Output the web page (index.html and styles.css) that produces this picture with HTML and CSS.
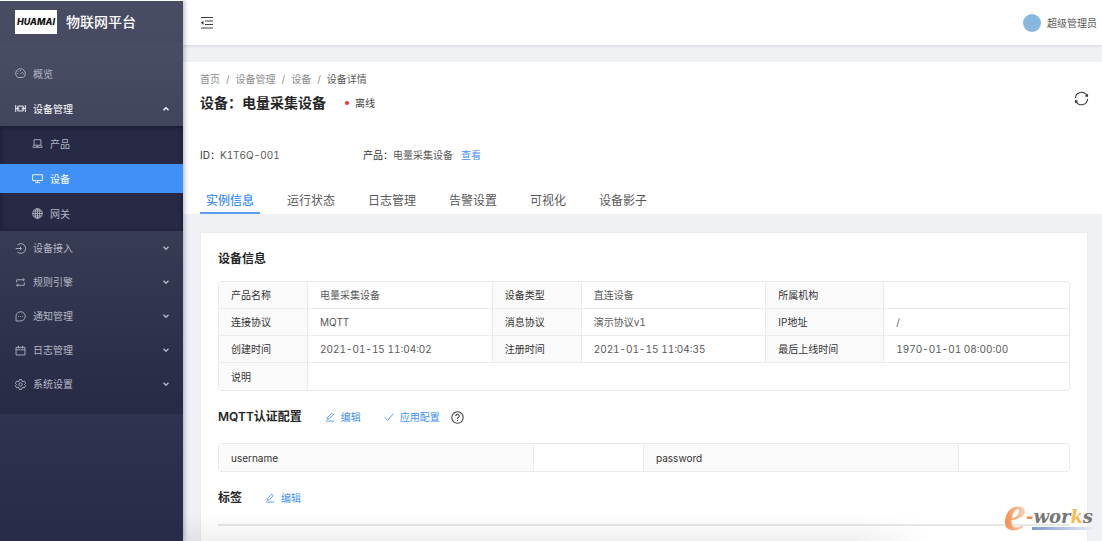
FILE: index.html
```html
<!DOCTYPE html>
<html lang="zh-CN">
<head>
<meta charset="utf-8">
<title>物联网平台</title>
<link rel="stylesheet" href="styles.css">
</head>
<body>
<div class="layout">
  <aside class="sider">
    <div class="brand">
      <span class="brand-logo">HUAMAI</span>
      <h1 class="brand-name">物联网平台</h1>
    </div>
    <nav class="menu">
      <a class="item item-top" href="#">
        <svg class="icon" viewBox="0 0 16 16"><path d="M4 13.800a7 7 0 1 1 8 0z"/><path d="M8 9l2.800-3M8 3v1.500M3.200 8h1.400M11.500 8h1.400M4.500 4.600l1 1"/></svg>
        <span>概览</span>
      </a>
      <button class="item item-top item-open" type="button">
        <svg class="icon" viewBox="0 0 16 16"><path d="M1 3v10M15 3v10M4 4.500h8v7H4zM1 8h3M12 8h3M5.500 6.500v3M10.500 6.500v3"/></svg>
        <span>设备管理</span>
        <svg class="arrow" viewBox="0 0 8 8"><path d="M1.500 5.300L4 2.800l2.500 2.500"/></svg>
      </button>
      <div class="submenu">
        <a class="item item-sub" href="#">
          <svg class="icon" viewBox="0 0 16 16"><path d="M3 2.500h10v8H3zM1.500 13.500v-1.500l1.500-1.500M14.500 13.500v-1.500l-1.500-1.500M1.500 13.500h13M6 12h4"/></svg>
          <span>产品</span>
        </a>
        <a class="item item-sub item-active" href="#">
          <svg class="icon" viewBox="0 0 16 16"><path d="M1 2.500h14v8.500H1zM8 11v3M4.500 14h7"/></svg>
          <span>设备</span>
        </a>
        <a class="item item-sub" href="#">
          <svg class="icon" viewBox="0 0 16 16"><circle cx="8" cy="8" r="7"/><ellipse cx="8" cy="8" rx="3.300" ry="7"/><path d="M8 1v14M1 8h14M2.200 4.500h11.600M2.200 11.500h11.600"/></svg>
          <span>网关</span>
        </a>
      </div>
      <button class="item" type="button">
        <svg class="icon" viewBox="0 0 16 16"><path d="M3.500 3a7 7 0 1 1 0 10M1 8h8.500M7 5.500L9.500 8 7 10.500"/></svg>
        <span>设备接入</span>
        <svg class="arrow" viewBox="0 0 8 8"><path d="M1.500 2.800L4 5.300l2.500-2.500"/></svg>
      </button>
      <button class="item" type="button">
        <svg class="icon" viewBox="0 0 16 16"><path d="M2.500 8V4h11M11.500 2l2.200 2-2.200 2M13.500 8v4h-11M4.500 10l-2.200 2 2.200 2"/></svg>
        <span>规则引擎</span>
        <svg class="arrow" viewBox="0 0 8 8"><path d="M1.500 2.800L4 5.300l2.500-2.500"/></svg>
      </button>
      <button class="item" type="button">
        <svg class="icon" viewBox="0 0 16 16"><path d="M1.500 14.500V8A6.700 6.700 0 1 1 8 14.500z"/><path d="M4.500 8h1.200M7.400 8h1.200M10.300 8h1.200"/></svg>
        <span>通知管理</span>
        <svg class="arrow" viewBox="0 0 8 8"><path d="M1.500 2.800L4 5.300l2.500-2.500"/></svg>
      </button>
      <button class="item" type="button">
        <svg class="icon" viewBox="0 0 16 16"><path d="M1.500 3.500h13v11h-13zM1.500 7h13M5 1v4M11 1v4"/></svg>
        <span>日志管理</span>
        <svg class="arrow" viewBox="0 0 8 8"><path d="M1.500 2.800L4 5.300l2.500-2.500"/></svg>
      </button>
      <button class="item" type="button">
        <svg class="icon" viewBox="0 0 16 16"><path d="M6.300 1h3.400l.5 2.200 1.400.8 2.200-.7 1.700 3-1.700 1.700 1.700 1.700-1.700 3-2.200-.7-1.400.8-.5 2.200H6.300l-.5-2.200-1.400-.8-2.200.7-1.700-3L2.200 8 .5 6.300l1.700-3 2.200.7 1.400-.8z"/><circle cx="8" cy="8" r="2.400"/></svg>
        <span>系统设置</span>
        <svg class="arrow" viewBox="0 0 8 8"><path d="M1.500 2.800L4 5.300l2.500-2.500"/></svg>
      </button>
    </nav>
  </aside>

  <div class="main">
    <header class="topbar">
      <button class="icon-button" type="button" aria-label="收起菜单">
        <svg class="fold" viewBox="0 0 14 14"><path d="M1 1.500h12M5 5h8M5 8.500h8M1 12h12"/><path class="solid" d="M3.500 4.700v4.200L.8 6.800z"/></svg>
      </button>
      <div class="user"><span class="avatar"></span><span>超级管理员</span></div>
    </header>

    <section class="page-header">
      <nav class="crumbs">
        <a href="#">首页</a><i>/</i><a href="#">设备管理</a><i>/</i><a href="#">设备</a><i>/</i><span class="crumb-last">设备详情</span>
      </nav>
      <div class="title-row">
        <h2 class="title">设备：电量采集设备</h2>
        <span class="status"><span class="dot"></span>离线</span>
        <button class="icon-button refresh" type="button" aria-label="刷新">
          <svg class="sync" viewBox="0 0 16 16"><path d="M1.500 7.500A6.500 6.500 0 0 1 13.600 4.600M14.500 8.500A6.500 6.500 0 0 1 2.400 11.400"/><path class="solid" d="M15 2.600v3.800l-3.700-.9zM1 13.400V9.600l3.700.9z"/></svg>
        </button>
      </div>
      <div class="facts">
        <div class="fact"><span class="dark">ID：</span>K1T6Q-001</div>
        <div class="fact"><span class="dark">产品：</span>电量采集设备<a class="link view" href="#">查看</a></div>
      </div>
      <nav class="tabs">
        <a class="tab tab-active" href="#">实例信息</a>
        <a class="tab" href="#">运行状态</a>
        <a class="tab" href="#">日志管理</a>
        <a class="tab" href="#">告警设置</a>
        <a class="tab" href="#">可视化</a>
        <a class="tab" href="#">设备影子</a>
      </nav>
    </section>

    <section class="card">
      <div class="section-head"><h3>设备信息</h3></div>
      <table class="desc">
        <colgroup><col class="c-label"><col><col class="c-label"><col><col class="c-label-wide"><col></colgroup>
        <tr><th>产品名称</th><td>电量采集设备</td><th>设备类型</th><td>直连设备</td><th>所属机构</th><td></td></tr>
        <tr><th>连接协议</th><td>MQTT</td><th>消息协议</th><td>演示协议v1</td><th>IP地址</th><td>/</td></tr>
        <tr><th>创建时间</th><td>2021-01-15 11:04:02</td><th>注册时间</th><td>2021-01-15 11:04:35</td><th>最后上线时间</th><td>1970-01-01 08:00:00</td></tr>
        <tr><th>说明</th><td colspan="5"></td></tr>
      </table>

      <div class="section-head section-head-tools">
        <h3>MQTT认证配置</h3>
        <button class="link action" type="button">
          <svg class="glyph" viewBox="0 0 16 16"><path d="M1.500 14.500h13M3.500 11.500l.6-3L10.800 1.800l2.400 2.400-6.700 6.700z"/></svg>编辑
        </button>
        <button class="link action" type="button">
          <svg class="glyph" viewBox="0 0 16 16"><path d="M1.500 8.500l4.500 5L14.500 3"/></svg>应用配置
        </button>
        <button class="icon-button help" type="button" aria-label="帮助">
          <svg class="question" viewBox="0 0 16 16"><circle cx="8" cy="8" r="7"/><path d="M5.800 6.300a2.200 2.100 0 1 1 3.200 1.800c-.7.400-1 .7-1 1.600M8 11.200v1.200"/></svg>
        </button>
      </div>
      <table class="desc">
        <colgroup><col class="c-key"><col class="c-value"><col class="c-key"><col class="c-value"></colgroup>
        <tr><th>username</th><td></td><th>password</th><td></td></tr>
      </table>

      <div class="section-head section-head-tools">
        <h3>标签</h3>
        <button class="link action" type="button">
          <svg class="glyph" viewBox="0 0 16 16"><path d="M1.500 14.500h13M3.500 11.500l.6-3L10.800 1.800l2.400 2.400-6.700 6.700z"/></svg>编辑
        </button>
      </div>
      <div class="rule"></div>
    </section>
    <div class="fade"></div>
  </div>
</div>
<div class="watermark"><span class="wm-e">e</span><span class="wm-rest"><span class="wm-text"><b class="wm-dash">-</b>wor<b class="wm-k">k</b>s</span><span class="wm-bar"></span></span></div>
</body>
</html>
```
FILE: styles.css
```css
* { box-sizing: border-box; }
body {
  margin: 0;
  background: #fff;
  color: #595959;
  font: 10px/16px Inter, "Noto Sans CJK SC", sans-serif;
  font-variant-numeric: tabular-nums;
}
a { color: inherit; text-decoration: none; }
button { margin: 0; padding: 0; border: 0; background: none; color: inherit; font: inherit; cursor: pointer; }
h1, h2, h3 { margin: 0; }
svg { display: block; flex: none; fill: none; stroke: currentColor; stroke-width: 1.3; }
.solid { fill: currentColor; stroke: none; }

.layout { display: flex; height: 100vh; overflow: hidden; }

.sider {
  flex: none;
  width: 183px;
  border-top: 1px solid #fff;
  background: linear-gradient(#484d64, #282b48);
  box-shadow: 1px 0 5px rgba(0, 21, 41, .35);
  z-index: 2;
}
.brand { display: flex; align-items: center; gap: 9px; height: 42px; padding: 0 15px; }
.brand-logo {
  width: 42px;
  height: 24px;
  background: #fff;
  color: #111;
  font: italic 800 9px/24px Inter, sans-serif;
  text-align: center;
}
.brand-name { color: #fff; font-size: 14px; font-weight: 500; line-height: 24px; }
.menu { padding: 13px 0; background: linear-gradient(#484d64, #272a45); color: #b4b7c2; }
.item { display: flex; align-items: center; gap: 7px; width: 100%; height: 34px; padding: 0 13px 0 15px; text-align: left; }
.item-top { height: 35px; }
.item-open { color: #fff; }
.icon { width: 11px; height: 11px; }
.arrow { width: 8px; height: 8px; margin-left: auto; stroke-width: 1.4; }
.submenu { padding: 3px 0; background: #272945; box-shadow: inset 0 1px 5px rgba(0, 0, 0, .4); }
.item-sub { height: 29px; margin-bottom: 6px; padding-left: 32px; }
.item-sub:last-child { margin-bottom: 0; }
.item-active { background: #4190f7; color: #fff; }

.main { position: relative; flex: 1; min-width: 0; background: #eff1f5; }
.topbar {
  display: flex;
  align-items: center;
  justify-content: space-between;
  height: 45px;
  padding: 0 5px 0 17px;
  background: #fff;
  box-shadow: 0 1px 3px rgba(0, 21, 41, .12);
}
.icon-button { color: #404040; }
.fold { width: 14px; height: 14px; stroke-width: 1.2; }
.user { display: flex; align-items: center; gap: 6px; }
.avatar { width: 18px; height: 18px; border-radius: 50%; background: #87b8e0; }

.page-header { margin-top: 17px; padding: 9px 13px 0 17px; background: #fff; }
.crumbs { display: flex; color: #8c8c8c; }
.crumbs i { margin: 0 6px; font-style: normal; }
.crumb-last { color: #595959; }
.title-row { display: flex; align-items: center; height: 32px; }
.title { color: #262626; font-size: 14px; font-weight: 600; line-height: 24px; }
.status { display: flex; align-items: center; gap: 6px; margin-left: 19px; color: #404040; }
.dot { width: 4px; height: 4px; border-radius: 50%; background: #f5302e; }
.refresh { margin: -10px 0 0 auto; }
.sync { width: 15px; height: 15px; stroke-width: 1.2; }
.facts { display: flex; gap: 21px; padding-top: 28px; }
.fact { min-width: 142px; }
.dark { color: #333; }
.link { color: #4190f7; }
.view { margin-left: 8px; }
.tabs { display: flex; gap: 21px; margin-top: 24px; font-size: 12px; line-height: 20px; }
.tab { height: 27px; padding: 4px 6px 0; }
.tab-active { border-bottom: 2px solid #5b9ef8; color: #4190f7; font-weight: 500; }

.card {
  margin: 18px 14px 0 17px;
  min-height: 100%;
  padding: 17px 17px 0;
  border: 1px solid #ebebeb;
  background: #fff;
}
.section-head { display: flex; align-items: center; height: 18px; margin-bottom: 13px; }
.section-head-tools { margin-bottom: 17px; }
.section-head h3 { color: #262626; font-size: 12px; font-weight: 600; line-height: 18px; }
.action { display: flex; align-items: center; gap: 6px; margin-left: 23px; }
.glyph { width: 10px; height: 10px; stroke-width: 1.4; }
.help { margin-left: 11px; }
.question { width: 13px; height: 13px; }

.desc {
  width: 100%;
  margin-bottom: 17px;
  border: 1px solid #ebebeb;
  border-radius: 3px;
  border-spacing: 0;
  table-layout: fixed;
}
.desc th, .desc td { height: 27px; padding: 0 12px; border-right: 1px solid #ebebeb; border-bottom: 1px solid #ebebeb; text-align: left; }
.desc th { background: #fafafa; color: #333; font-weight: 400; }
.desc tr > :last-child { border-right: 0; }
.desc tr:last-child > * { border-bottom: 0; }
.c-label { width: 89px; }
.c-label-wide { width: 118px; }
.c-key { width: 37%; }
.c-value { width: 13%; }
.rule { height: 2px; background: #e8e8e8; }

.fade {
  position: absolute;
  right: 170px;
  bottom: 0;
  left: 0;
  height: 28px;
  background: linear-gradient(rgba(0, 0, 0, 0), rgba(0, 0, 0, .06));
  mask-image: linear-gradient(90deg, #000 90%, transparent);
  pointer-events: none;
}

.watermark { position: absolute; right: 9px; bottom: 0; z-index: 3; display: flex; align-items: flex-end; }
.wm-e {
  background: linear-gradient(90deg, #f28a4b, #fbd3b8);
  background-clip: text;
  color: transparent;
  font: italic bold 50px/56px "Liberation Serif", serif;
}
.wm-rest { display: flex; flex-direction: column; margin-bottom: 11px; }
.wm-text { color: #777; font: italic bold 18px/20px "DejaVu Serif", "Liberation Serif", serif; }
.wm-dash { color: #f28a4b; }
.wm-k { color: #fbb94f; }
.wm-bar { height: 3px; margin-left: 6px; background: linear-gradient(90deg, #7f98d6, #e8edf8); }
```
